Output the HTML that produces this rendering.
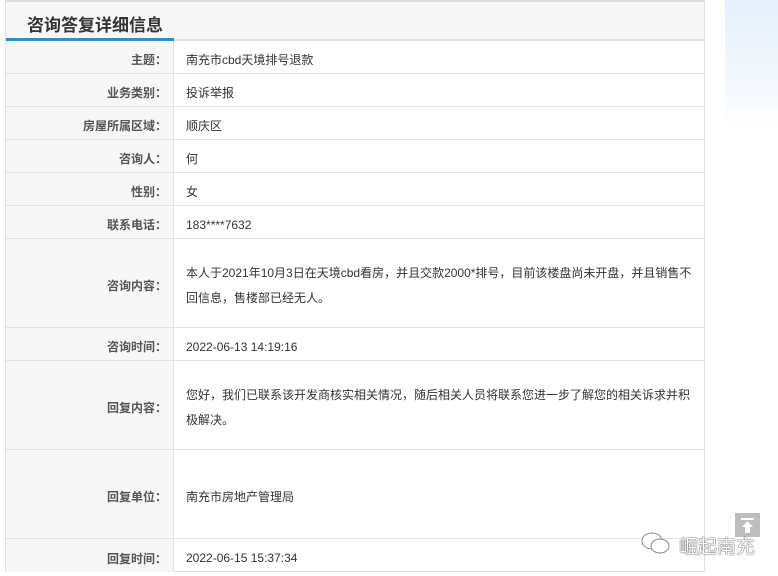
<!DOCTYPE html>
<html><head><meta charset="utf-8"><style>
*{margin:0;padding:0;box-sizing:border-box}
body{width:778px;height:576px;background:#fff;position:relative;overflow:hidden;font-family:"Liberation Sans","Noto Sans CJK SC",sans-serif;}
.bg{position:absolute;left:725px;top:0;width:53px;height:130px;background:linear-gradient(180deg,#e3f0fb 0%,#eef5fc 40%,#f8fbfe 80%,#fff 100%);}
.panel{position:absolute;left:5px;top:0;width:700px;height:572px;border:1px solid #e0e0e0;border-top:2px solid #ddd;}
.hd{position:absolute;left:0;top:0;width:698px;height:39px;background:#f7f7f7;border-bottom:2px solid #e0e0e0;}
.hd span{position:absolute;left:21px;top:9px;font-size:17px;font-weight:bold;color:#333;}
.hd i{position:absolute;left:0;bottom:-2px;width:168px;height:3px;background:#1996d5;}
.row{position:absolute;left:0;width:698px;border-bottom:1px solid #e3e3e3;}
.l{position:absolute;left:0;top:0;bottom:0;width:168px;background:#f7f7f7;border-right:1px solid #e3e3e3;font-size:12px;font-weight:bold;color:#555;text-align:right;padding-right:6px;padding-top:5px;display:flex;align-items:center;justify-content:flex-end;font-family:"Noto Sans CJK SC",sans-serif;}
.v{position:absolute;left:180px;top:0;bottom:0;right:6px;font-size:12px;color:#333;display:flex;align-items:center;line-height:25px;padding-top:6px;}
.wm{position:absolute;left:679px;top:532px;font-size:19px;color:#fff;text-shadow:0 0 1px #333,0 0 1px #333;}
.top{position:absolute;left:735px;top:513px;width:25px;height:24px;background:#bdbdbd;}
</style></head><body>
<div class="bg"></div>
<div class="panel">
<div class="hd"><span>咨询答复详细信息</span><i></i></div>
<div class="row" style="top:39px;height:33px"><div class="l">主题：</div><div class="v">南充市cbd天境排号退款</div></div>
<div class="row" style="top:72px;height:33px"><div class="l">业务类别：</div><div class="v">投诉举报</div></div>
<div class="row" style="top:105px;height:33px"><div class="l">房屋所属区域：</div><div class="v">顺庆区</div></div>
<div class="row" style="top:138px;height:33px"><div class="l">咨询人：</div><div class="v">何</div></div>
<div class="row" style="top:171px;height:33px"><div class="l">性别：</div><div class="v">女</div></div>
<div class="row" style="top:204px;height:33px"><div class="l">联系电话：</div><div class="v">183****7632</div></div>
<div class="row" style="top:237px;height:89px"><div class="l">咨询内容：</div><div class="v">本人于2021年10月3日在天境cbd看房，并且交款2000*排号，目前该楼盘尚未开盘，并且销售不<br>回信息，售楼部已经无人。</div></div>
<div class="row" style="top:326px;height:33px"><div class="l">咨询时间：</div><div class="v">2022-06-13 14:19:16</div></div>
<div class="row" style="top:359px;height:89px"><div class="l">回复内容：</div><div class="v">您好，我们已联系该开发商核实相关情况，随后相关人员将联系您进一步了解您的相关诉求并积<br>极解决。</div></div>
<div class="row" style="top:448px;height:89px"><div class="l">回复单位：</div><div class="v">南充市房地产管理局</div></div>
<div class="row" style="top:537px;height:33px;border-bottom:none"><div class="l">回复时间：</div><div class="v">2022-06-15 15:37:34</div></div>
</div>
<div class="top"><svg width="25" height="24" viewBox="0 0 25 24"><rect x="6" y="5" width="13" height="2" fill="#fff"/><path d="M12.5 8 L18 14 L15 14 L15 20 L10 20 L10 14 L7 14 Z" fill="#fff"/></svg></div>
<svg style="position:absolute;left:640px;top:530px" width="32" height="26" viewBox="0 0 32 26"><ellipse cx="12" cy="11" rx="10" ry="8" fill="#fff" stroke="#888" stroke-width="1"/><ellipse cx="20" cy="16" rx="9" ry="7" fill="#fff" stroke="#888" stroke-width="1"/></svg>
<div class="wm">崛起南充</div>
</body></html>
